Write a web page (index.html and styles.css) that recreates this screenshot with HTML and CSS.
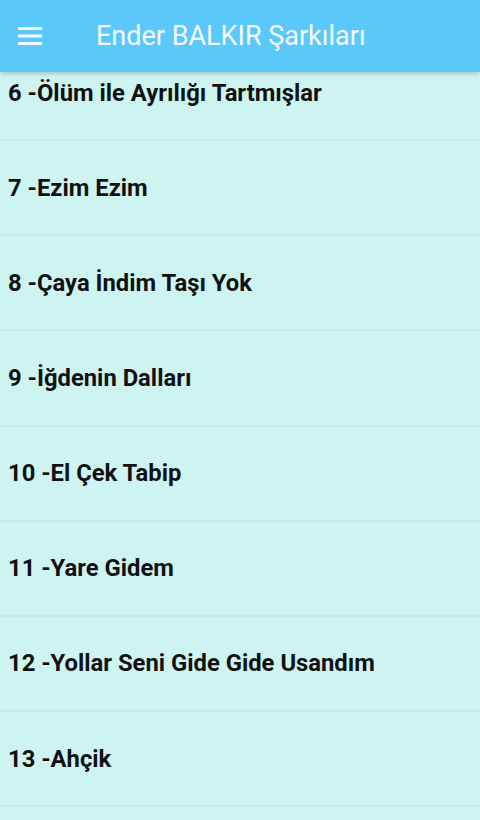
FILE: index.html
```html
<!DOCTYPE html>
<html lang="tr">
<head>
  <meta charset="UTF-8">
  <title>Ender BALKIR Şarkıları</title>
  <link rel="stylesheet" href="styles.css">
</head>
<body>
  <header class="app-bar">
    <span class="app-bar-menu">
      <svg width="24" height="20" viewBox="0 0 24 20">
        <rect x="0" y="1" width="24" height="3" fill="#f4faff"/>
        <rect x="0" y="8.5" width="24" height="3" fill="#f4faff"/>
        <rect x="0" y="16" width="24" height="3" fill="#f4faff"/>
      </svg>
    </span>
    <h1 class="app-bar-title">Ender BALKIR Şarkıları</h1>
  </header>
  <main class="song-view">
    <ul class="song-list">
      <li class="song-item">6 -Ölüm ile Ayrılığı Tartmışlar</li>
      <li class="song-item">7 -Ezim Ezim</li>
      <li class="song-item">8 -Çaya İndim Taşı Yok</li>
      <li class="song-item">9 -İğdenin Dalları</li>
      <li class="song-item">10 -El Çek Tabip</li>
      <li class="song-item">11 -Yare Gidem</li>
      <li class="song-item">12 -Yollar Seni Gide Gide Usandım</li>
      <li class="song-item">13 -Ahçik</li>
    </ul>
  </main>
</body>
</html>
```

FILE: styles.css
```css
/*reset*/
body, ul, li, h1 {
    padding: 0;
    margin: 0;
}

li {
    list-style: none;
}

body {
    font-family: Roboto, "Liberation Sans", sans-serif;
    color: #111;
    background-color: #cdf4f1;
    height: 820px;
    overflow: hidden;
}

/*app bar*/
.app-bar {
    position: relative;
    z-index: 2;
    height: 72px;
    display: flex;
    align-items: center;
    background-color: #5bc8fa;
    box-shadow: 0 2px 4px rgba(0, 0, 0, .18);
}

.app-bar-menu {
    display: flex;
    width: 24px;
    margin-left: 18px;
    margin-right: 54px;
}

.app-bar-title {
    font-size: 27px;
    font-weight: 400;
    color: #f4faff;
}

/*list*/
.song-view {
    height: 748px;
    overflow: hidden;
}

.song-list {
    margin-top: -26px;
}

.song-item {
    height: 93.15px;
    display: flex;
    align-items: center;
    padding-left: 8px;
    font-size: 23.8px;
    font-weight: 700;
    border-bottom: 2px solid #c6ecdf;
}
```
